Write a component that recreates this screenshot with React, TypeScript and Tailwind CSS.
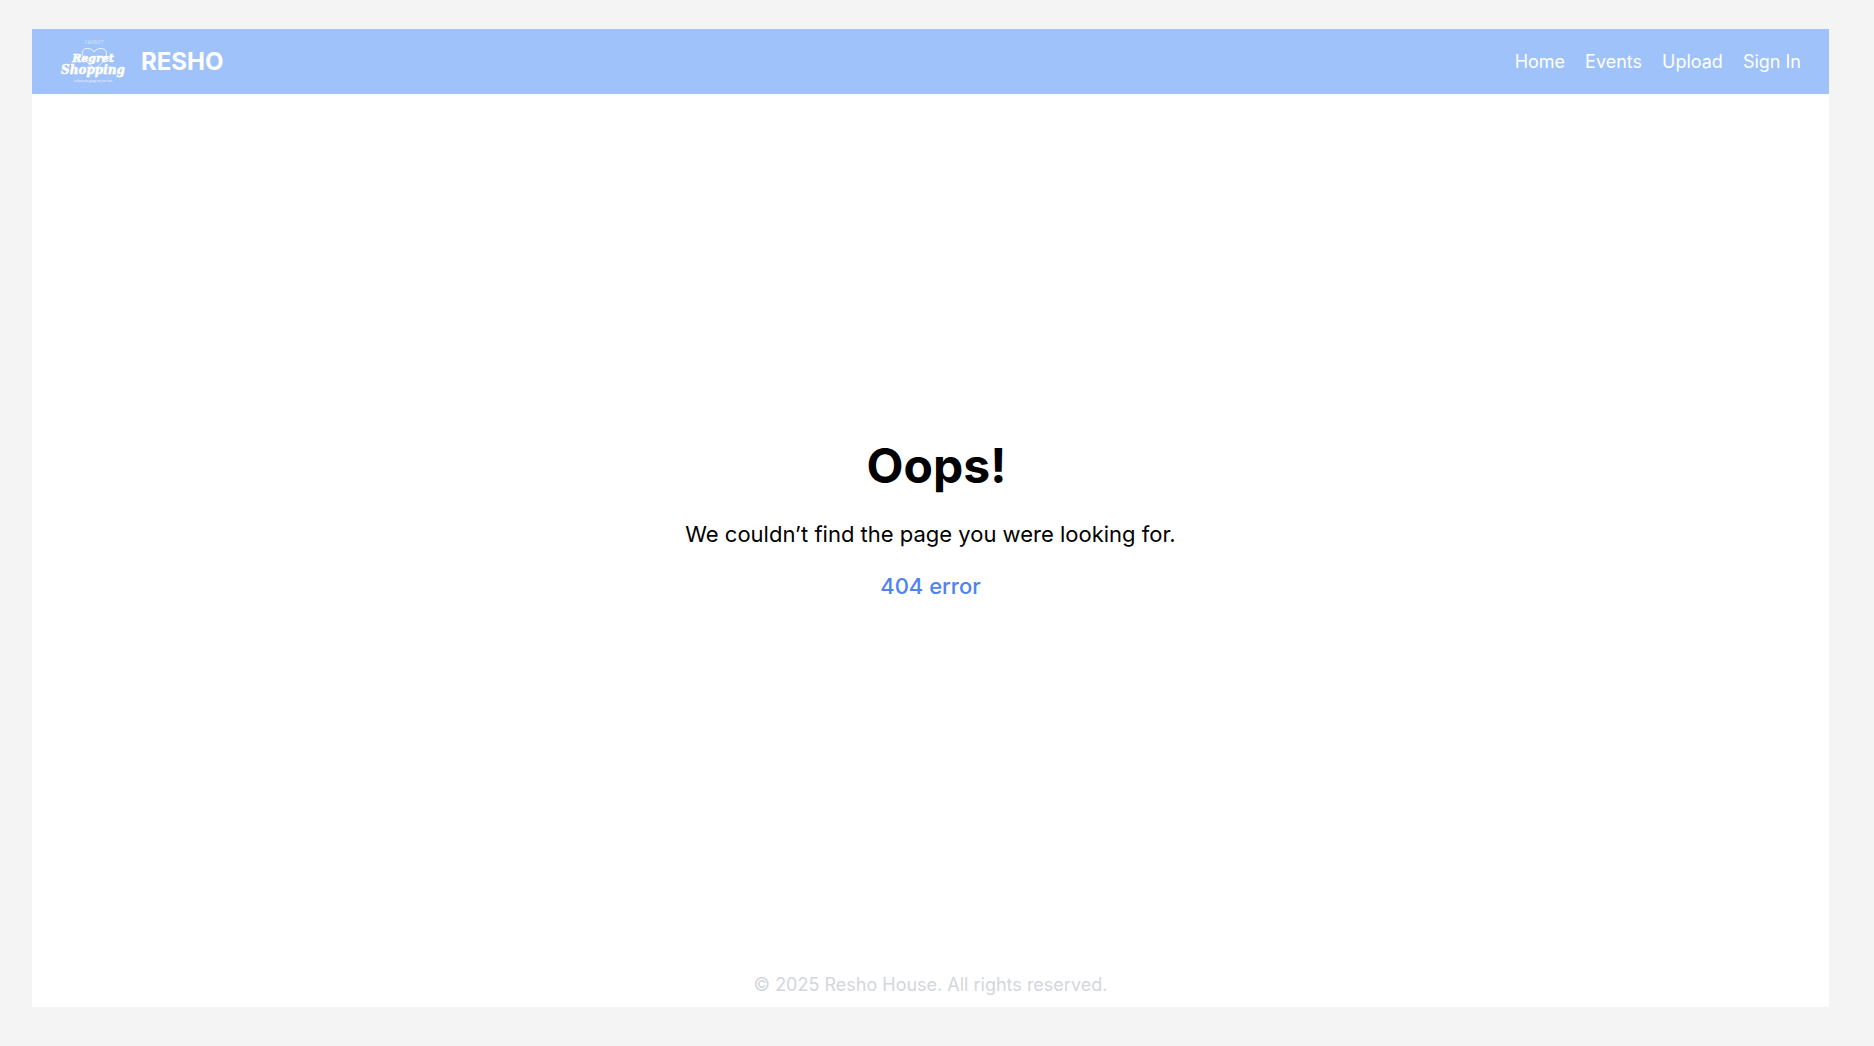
function Logo() {
  return (
    <svg viewBox="0 0 70 50" className="h-[50px] w-[70px] shrink-0" fill="#fff" role="img" aria-label="Regret Shopping">
      <text x="34" y="7" textAnchor="middle" fontFamily="DejaVu Serif, serif" fontStyle="italic" fontSize="5" opacity="0.6">
        180X07
      </text>
      <path
        d="M23.500 20C21 15 23 11.500 27 11.500C30.500 11.500 33 12.500 34 15C35.500 12.500 38 11.500 41 11.500C45.500 11.500 47.500 15 46 19.500C44.500 24 39 29 35 31.500C30 28.500 26 25 23.500 20Z"
        fill="none"
        stroke="#fff"
        strokeWidth="1"
        opacity="0.8"
      />
      <text x="33" y="25" textAnchor="middle" fontFamily="DejaVu Serif, serif" fontStyle="italic" fontWeight="700" fontSize="11" stroke="#fff" strokeWidth="0.6">
        Regret
      </text>
      <text x="33" y="37" textAnchor="middle" fontFamily="DejaVu Serif, serif" fontStyle="italic" fontWeight="700" fontSize="12" stroke="#fff" strokeWidth="0.5">
        Shopping
      </text>
      <text x="33" y="45" textAnchor="middle" fontFamily="Liberation Serif, serif" fontStyle="italic" fontSize="3" opacity="0.9">
        to those you gouge up your own
      </text>
    </svg>
  );
}

const links = ["Home", "Events", "Upload", "Sign In"];

export default function App() {
  return (
    <div className="flex min-h-screen flex-col bg-[#f4f4f4] pt-[29px] pr-[45px] pb-[39px] pl-8 font-['Inter',sans-serif]">
      <div className="flex grow flex-col bg-white">
        <header className="flex h-[65px] items-center justify-between bg-[#9ec2f9] px-7 text-white">
          <a href="#" className="flex items-center gap-[11px]">
            <Logo />
            <span className="text-2xl font-bold">RESHO</span>
          </a>
          <nav className="flex gap-5 text-[18px] leading-7">
            {links.map((label) => (
              <a key={label} href="#">
                {label}
              </a>
            ))}
          </nav>
        </header>
        <main className="flex grow flex-col items-center justify-center pb-[22px] text-center text-black">
          <h1 className="pl-3 text-5xl font-bold">Oops!</h1>
          <p className="mt-7 text-[22px] leading-8">We couldn’t find the page you were looking for.</p>
          <p className="mt-5 text-[22px] leading-8 font-medium text-[#4f83f1]">404 error</p>
        </main>
        <footer className="pb-2 text-center text-[18px] leading-7 text-[#d3d6dc]">
          © 2025 Resho House. All rights reserved.
        </footer>
      </div>
    </div>
  );
}
